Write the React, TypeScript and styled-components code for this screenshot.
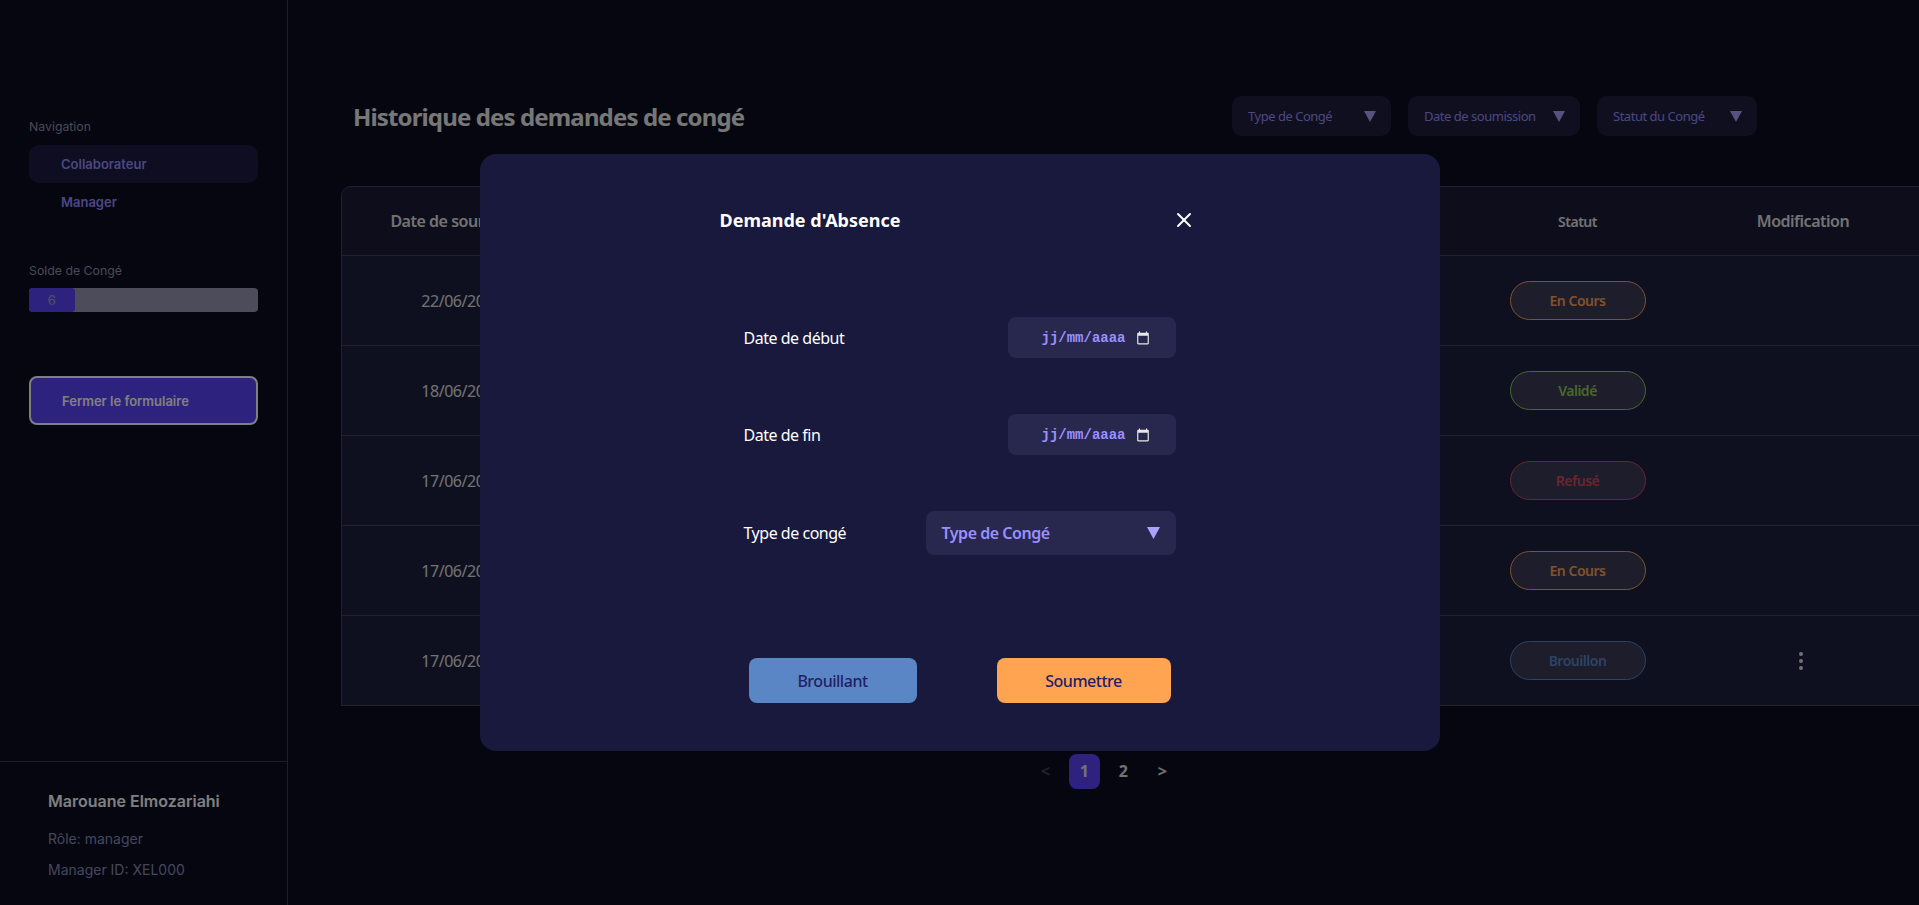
import styled, { createGlobalStyle } from "styled-components";
import { EllipsisVertical, X } from "lucide-react";

const GlobalStyle = createGlobalStyle`
    html, body {
        margin: 0;
        height: 100%;
        overflow: hidden;
        background: #0b0d20;
    }
    * {
        box-sizing: border-box;
    }
`;

const STATUS_COLORS: Record<string, string> = {
    "En Cours": "#ffa552",
    "Validé": "#92d052",
    "Refusé": "#d64c5a",
    "Brouillon": "#5a86c5",
};

const ROWS = [
    {date: "22/06/2025", status: "En Cours"},
    {date: "18/06/2025", status: "Validé"},
    {date: "17/06/2025", status: "Refusé"},
    {date: "17/06/2025", status: "En Cours"},
    {date: "17/06/2025", status: "Brouillon", editable: true},
];

const Page = styled.div`
    display: flex;
    width: 1919px;
    height: 905px;
    overflow: hidden;
    background: #0b0d20;
    font-family: "Noto Sans", sans-serif;
    letter-spacing: -0.03em;
`;

const Sidebar = styled.aside`
    flex: 0 0 288px;
    display: flex;
    flex-direction: column;
    border-right: 1px solid #3a3b55;
    font-family: Inter, sans-serif;
    letter-spacing: normal;
`;

const SidebarBody = styled.div`
    flex: 1;
    padding: 119px 29px 0;
`;

const SideLabel = styled.div`
    height: 16px;
    line-height: 16px;
    font-size: 12.3px;
    color: #9193ad;
`;

const NavList = styled.nav`
    display: flex;
    flex-direction: column;
    margin-top: 10px;
    width: 229px;
`;

const NavItem = styled.div<{ $active?: boolean }>`
    height: 38px;
    line-height: 38px;
    padding-left: 32px;
    border-radius: 10px;
    font-size: 13px;
    font-weight: 600;
    color: #9690ff;
    background: ${p => p.$active ? "#1c1a42" : "transparent"};
`;

const BalanceBlock = styled.div`
    margin-top: 42px;
    width: 229px;
`;

const BalanceTrack = styled.div`
    margin-top: 9px;
    height: 24px;
    border-radius: 4px;
    background: #9898b6;
`;

const BalanceFill = styled.div`
    height: 100%;
    border-radius: 4px;
    background: #5c44ff;
    color: #9f98d8;
    font-size: 13px;
    font-weight: 500;
    line-height: 24px;
    text-align: center;
`;

const CloseFormButton = styled.button`
    display: block;
    margin-top: 64px;
    width: 229px;
    height: 49px;
    padding: 0 0 0 31px;
    border: 2px solid #fff;
    border-radius: 8px;
    background: #5c44ff;
    color: #fff;
    font: 600 13px Inter, sans-serif;
    text-align: left;
`;

const SidebarFooter = styled.footer`
    height: 144px;
    padding: 28px 48px 0;
    border-top: 1px solid #3a3b55;
`;

const UserName = styled.div`
    height: 22px;
    line-height: 22px;
    font-size: 16px;
    font-weight: 600;
    color: #fff;
`;

const UserMeta = styled.div`
    margin-top: 16px;
    height: 22px;
    line-height: 22px;
    font-size: 14px;
    color: #8a8dbb;

    & + & {
        margin-top: 9px;
    }
`;

const Main = styled.main`
    flex: 1;
    min-width: 0;
    overflow: hidden;
    padding-top: 96px;
`;

const Header = styled.header`
    display: flex;
    align-items: center;
    justify-content: space-between;
    height: 40px;
    padding: 0 162px 0 65px;
`;

const Title = styled.h1`
    margin: 0;
    font-size: 24px;
    font-weight: 700;
    letter-spacing: -0.036em;
    color: #eee;
`;

const Filters = styled.div`
    display: flex;
    gap: 17px;
`;

const Filter = styled.div<{ $width: number }>`
    display: flex;
    align-items: center;
    justify-content: space-between;
    width: ${p => p.$width}px;
    height: 40px;
    padding: 0 15px 0 16px;
    border-radius: 10px;
    background: #201f3f;
    color: #9690ff;
    font-size: 13px;
`;

const Arrow = styled.svg`
    flex: none;
    width: 12px;
    height: 11px;
    fill: #a9a4ff;
`;

const Table = styled.div`
    margin: 50px 0 0 53px;
    width: 1580px;
    border: 1px solid #44455f;
    border-radius: 10px 0 0 0;
    background: #1c2040;
    overflow: hidden;
`;

const TableHead = styled.div`
    display: grid;
    grid-template-columns: 249px 874px 225px 226px;
    align-items: center;
    height: 68px;
    background: #1a1a38;
    color: #e4e4e4;
    font-weight: 600;
`;

const HeadCell = styled.div<{ $small?: boolean; $offset?: number }>`
    text-align: center;
    padding-right: ${p => p.$offset ?? 0}px;
    font-size: ${p => p.$small ? 14 : 16}px;
`;

const TableRow = styled.div`
    display: grid;
    grid-template-columns: 249px 874px 225px 226px;
    align-items: center;
    height: 90px;
    border-top: 1px solid #44455f;
`;

const DateCell = styled.div`
    padding-right: 10px;
    text-align: center;
    font-size: 16px;
    color: #e4e4e4;
`;

const BadgeCell = styled.div`
    display: flex;
    justify-content: center;
`;

const Badge = styled.div<{ $color: string }>`
    width: 136px;
    height: 39px;
    line-height: 37px;
    text-align: center;
    border: 1px solid ${p => p.$color};
    border-radius: 20px;
    background: #3a3a58;
    color: ${p => p.$color};
    font-size: 14px;
    font-weight: 600;
`;

const ActionCell = styled.div`
    display: flex;
    justify-content: center;
    padding-right: 5px;
    color: #e4e4e4;
`;

const Pagination = styled.div`
    display: flex;
    align-items: center;
    justify-content: center;
    margin-top: 48px;
    width: 1631px;
`;

const PageButton = styled.div<{ $active?: boolean; $muted?: boolean }>`
    width: 31px;
    height: 35px;
    margin: 0 4px;
    line-height: 35px;
    text-align: center;
    border-radius: 8px;
    font-size: 16px;
    font-weight: 700;
    background: ${p => p.$active ? "#5c44ff" : "transparent"};
    color: ${p => p.$muted ? "#44455f" : "#e4e4e4"};
`;

const Overlay = styled.div`
    position: fixed;
    inset: 0;
    display: flex;
    align-items: center;
    justify-content: center;
    background: rgba(0, 0, 0, 0.5);
`;

const Modal = styled.div`
    display: flex;
    justify-content: center;
    width: 960px;
    height: 597px;
    padding-top: 50px;
    border-radius: 16px;
    background: #18193d;
    color: #fff;
    font-family: "Noto Sans", sans-serif;
    letter-spacing: -0.03em;
`;

const Form = styled.form`
    width: 480px;
`;

const ModalHeader = styled.div`
    display: flex;
    align-items: center;
    justify-content: space-between;
    height: 32px;
    padding-right: 4px;
`;

const ModalTitle = styled.h2`
    margin: 0;
    font-size: 18px;
    font-weight: 700;
    letter-spacing: normal;
`;

const Fields = styled.div`
    display: flex;
    flex-direction: column;
    margin-top: 81px;
    padding: 0 24px;
`;

const Field = styled.div<{ $tall?: boolean }>`
    display: flex;
    align-items: center;
    justify-content: space-between;
    height: ${p => p.$tall ? 44 : 41}px;
    font-size: 16px;

    & + & {
        margin-top: 56px;
    }
`;

const DateBox = styled.div`
    display: flex;
    align-items: center;
    justify-content: flex-end;
    gap: 10px;
    width: 168px;
    height: 41px;
    padding-right: 26px;
    border-radius: 8px;
    background: #28284f;
    color: #9a8fff;
    font: 700 14px "Liberation Mono", monospace;
    letter-spacing: normal;
`;

const CalendarIcon = styled.svg`
    width: 14px;
    height: 14px;
    fill: #e8e8e8;
`;

const SelectBox = styled.div`
    display: flex;
    align-items: center;
    justify-content: space-between;
    width: 250px;
    height: 44px;
    padding: 0 16px;
    border-radius: 8px;
    background: #28284f;
    color: #9a8fff;
    font-size: 16px;
    font-weight: 600;
`;

const SelectArrow = styled(Arrow)`
    width: 13px;
    height: 12px;
`;

const Actions = styled.div`
    display: flex;
    justify-content: space-between;
    margin-top: 103px;
    padding: 0 29px;
`;

const ActionButton = styled.button<{ $bg: string; $width: number }>`
    width: ${p => p.$width}px;
    height: 45px;
    border: none;
    border-radius: 8px;
    background: ${p => p.$bg};
    color: #231f66;
    font: 500 16px "Noto Sans", sans-serif;
    letter-spacing: -0.03em;
`;

function TriangleIcon({as: Icon = Arrow}: { as?: typeof Arrow }) {
    return <Icon viewBox="0 0 12 11"><polygon points="0,0 12,0 6,11"/></Icon>;
}

export default function App() {
    return <>
        <GlobalStyle/>
        <Page>
            <Sidebar>
                <SidebarBody>
                    <SideLabel>Navigation</SideLabel>
                    <NavList>
                        <NavItem $active>Collaborateur</NavItem>
                        <NavItem>Manager</NavItem>
                    </NavList>
                    <BalanceBlock>
                        <SideLabel>Solde de Congé</SideLabel>
                        <BalanceTrack>
                            <BalanceFill style={{width: `${(6 / 30) * 100}%`}}>6</BalanceFill>
                        </BalanceTrack>
                    </BalanceBlock>
                    <CloseFormButton type="button">Fermer le formulaire</CloseFormButton>
                </SidebarBody>
                <SidebarFooter>
                    <UserName>Marouane Elmozariahi</UserName>
                    <UserMeta>Rôle: manager</UserMeta>
                    <UserMeta>Manager ID: XEL000</UserMeta>
                </SidebarFooter>
            </Sidebar>
            <Main>
                <Header>
                    <Title>Historique des demandes de congé</Title>
                    <Filters>
                        <Filter $width={159}>Type de Congé<TriangleIcon/></Filter>
                        <Filter $width={172}>Date de soumission<TriangleIcon/></Filter>
                        <Filter $width={160}>Statut du Congé<TriangleIcon/></Filter>
                    </Filters>
                </Header>
                <Table>
                    <TableHead>
                        <HeadCell $offset={8}>Date de soumission</HeadCell>
                        <div/>
                        <HeadCell $small>Statut</HeadCell>
                        <HeadCell>Modification</HeadCell>
                    </TableHead>
                    {ROWS.map((row, i) => <TableRow key={i}>
                        <DateCell>{row.date}</DateCell>
                        <div/>
                        <BadgeCell>
                            <Badge $color={STATUS_COLORS[row.status]}>{row.status}</Badge>
                        </BadgeCell>
                        <ActionCell>{row.editable && <EllipsisVertical size={24}/>}</ActionCell>
                    </TableRow>)}
                </Table>
                <Pagination>
                    <PageButton $muted>&lt;</PageButton>
                    <PageButton $active>1</PageButton>
                    <PageButton>2</PageButton>
                    <PageButton>&gt;</PageButton>
                </Pagination>
            </Main>
        </Page>
        <Overlay>
            <Modal>
                <Form>
                    <ModalHeader>
                        <ModalTitle>Demande d'Absence</ModalTitle>
                        <X size={24} strokeWidth={2}/>
                    </ModalHeader>
                    <Fields>
                        <Field>
                            Date de début
                            <DateBox>jj/mm/aaaa
                                <CalendarIcon viewBox="0 0 24 24"><path d="M20 3h-1V1h-2v2H7V1H5v2H4c-1.1 0-2 .9-2 2v16c0 1.1.9 2 2 2h16c1.1 0 2-.9 2-2V5c0-1.1-.9-2-2-2zm0 18H4V8h16v13z"/></CalendarIcon>
                            </DateBox>
                        </Field>
                        <Field>
                            Date de fin
                            <DateBox>jj/mm/aaaa
                                <CalendarIcon viewBox="0 0 24 24"><path d="M20 3h-1V1h-2v2H7V1H5v2H4c-1.1 0-2 .9-2 2v16c0 1.1.9 2 2 2h16c1.1 0 2-.9 2-2V5c0-1.1-.9-2-2-2zm0 18H4V8h16v13z"/></CalendarIcon>
                            </DateBox>
                        </Field>
                        <Field $tall>
                            Type de congé
                            <SelectBox>Type de Congé<TriangleIcon as={SelectArrow}/></SelectBox>
                        </Field>
                    </Fields>
                    <Actions>
                        <ActionButton type="button" $bg="#5a86c5" $width={168}>Brouillant</ActionButton>
                        <ActionButton type="button" $bg="#ffa552" $width={174}>Soumettre</ActionButton>
                    </Actions>
                </Form>
            </Modal>
        </Overlay>
    </>;
}
